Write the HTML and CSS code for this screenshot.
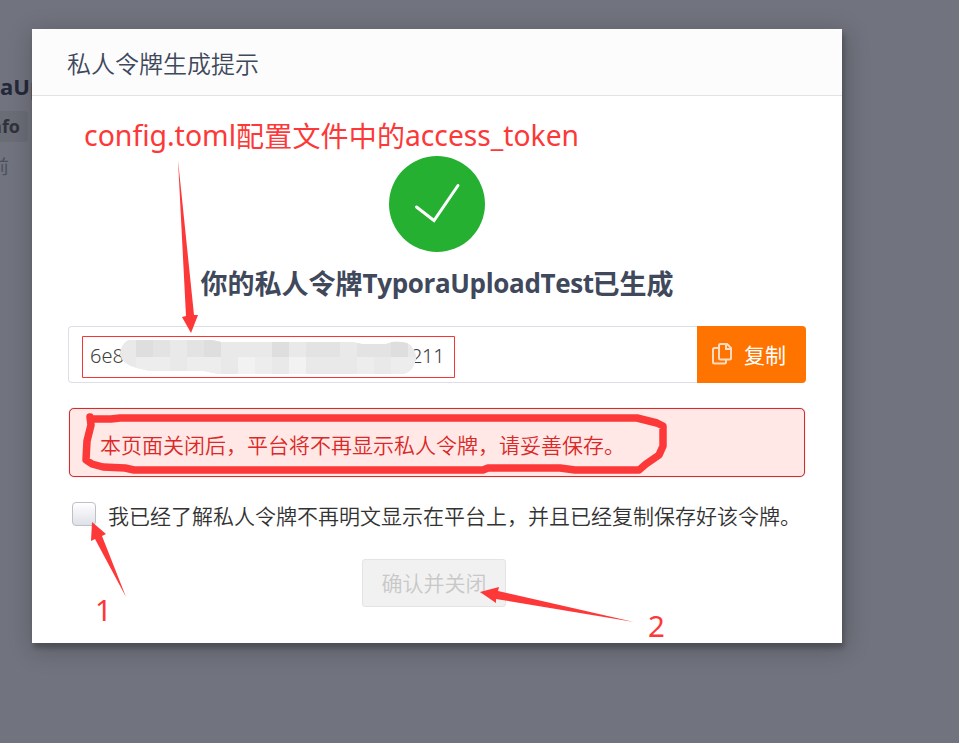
FILE: index.html
```html
<!DOCTYPE html>
<html lang="zh-CN">
<head>
<meta charset="utf-8">
<title>私人令牌生成提示</title>
<link rel="stylesheet" href="styles.css">
</head>
<body>
<aside class="behind">
  <div class="behind-name"><span>aUp</span></div>
  <div class="behind-chip"><span>info</span></div>
  <div class="behind-time"><span>前</span></div>
</aside>
<main class="modal">
  <header class="modal-header">私人令牌生成提示</header>
  <section class="modal-body">
    <svg class="success" viewBox="0 0 96 96"><circle cx="48" cy="48" r="48"/><path d="M27.500 51L45 64.500L69 29.500"/></svg>
    <h2 class="heading"><span>你的私人令牌</span><span class="latin">TyporaUploadTest</span><span>已生成</span></h2>
    <div class="token-row">
      <div class="token"><span>6e8</span><span class="token-end">211</span></div>
      <button class="copy">
        <svg viewBox="0 0 20 22"><path d="M7 5H2.500Q1 5 1 6.500V19Q1 20.500 2.500 20.500H12.500Q14 20.500 14 19V17M8.500 1H15L19 5V15Q19 16.500 17.500 16.500H8.500Q7 16.500 7 15V2.500Q7 1 8.500 1ZM14 1V6H19"/></svg>
        <span>复制</span>
      </button>
    </div>
    <div class="alert">本页面关闭后，平台将不再显示私人令牌，请妥善保存。</div>
    <label class="agree"><span class="box"></span><span>我已经了解私人令牌不再明文显示在平台上，并且已经复制保存好该令牌。</span></label>
    <button class="confirm" disabled>确认并关闭</button>
  </section>
</main>
<svg class="notes" viewBox="0 0 959 743">
  <defs><clipPath id="smear"><path d="M120 355Q120 345 128 340H212L221 342H353L362 344H386L392 342Q409 341 412 347Q418 355 415 362Q413 371 404 374H218L204 371H150L137 368Q123 365 120 355Z"/></clipPath></defs>
  <g clip-path="url(#smear)" shape-rendering="crispEdges">
    <path fill="#e9e9e9" d="M118 338H420V376H118Z"/>
    <path fill="#dedede" d="M136 340h17v17h-17zM204 340h17v17h-17zM391 340h17v17h-17zM272 340h17v17h-17z"/>
    <path fill="#e3e3e3" d="M153 340h17v17h-17zM187 340h17v17h-17zM306 340h34v17h-34zM357 340h34v17h-34z"/>
    <path fill="#ededed" d="M136 357h34v17h-34zM187 357h34v17h-34zM255 357h17v17h-17zM357 357h17v17h-17zM391 357h25v17h-25z"/>
    <path fill="#f2f2f2" d="M238 357h17v17h-17zM289 357h17v17h-17z"/>
  </g>
  <path class="frame" d="M82.500 336.500H454.500V377.500H82.500Z"/>
  <path class="scribble" d="M90 417L91 425L87 441L86 460L92 464L103 467L125 468L134 470H483L488 468H560L575 470H639L646 464L659 455L663 446V426L657 423L637 418H120L111 419H92"/>
  <g class="ink">
    <path d="M178 160L194 315L198 315L191 333L182 317L186 316Z"/>
    <path d="M92 522L106 534L102 536L126 597L95 539L91 541Z"/>
    <path d="M480 592L499 587L498 591L634 622L496 599L496 603Z"/>
    <text x="84" y="146" textLength="152" lengthAdjust="spacingAndGlyphs">config.toml</text>
    <text class="cjk" x="236" y="147" textLength="169">配置文件中的</text>
    <text x="405" y="146" textLength="174" lengthAdjust="spacingAndGlyphs">access_token</text>
    <text x="95" y="621">1</text>
    <text x="648" y="637">2</text>
  </g>
</svg>
</body>
</html>
```
FILE: styles.css
```css
* { box-sizing: border-box; }
body {
  margin: 0;
  height: 743px;
  overflow: hidden;
  display: flex;
  align-items: flex-start;
  background: #71737e;
  font-family: "Noto Sans", "Noto Sans CJK SC", sans-serif;
}
.behind {
  width: 32px;
  flex: none;
  padding-top: 69px;
}
.behind > div { display: flex; justify-content: flex-end; white-space: nowrap; }
.behind > .behind-name { justify-content: flex-start; height: 34px; font: 700 22px/34px "Open Sans"; color: #24283a; }
.behind-chip { width: 28px; height: 31px; margin-top: 8px; background: #6a6c76; border-radius: 0 4px 4px 0; font: 700 18px/31px "Open Sans"; color: #30323b; }
.behind-chip span { margin-right: 8px; }
.behind-time { width: 9px; margin-top: 10px; font-size: 19px; line-height: 30px; color: #4a4f5e; }
.modal {
  width: 810px;
  height: 614px;
  margin-top: 29px;
  flex: none;
  z-index: 1;
  background: #fff;
  box-shadow: 1.5px 4.5px 4.5px rgba(0,0,0,.2), 1.5px 4.5px 22px 3px rgba(0,0,0,.2);
}
.modal-header {
  height: 67px;
  padding: 0 35px;
  background: #fcfcfd;
  border-bottom: 1px solid #e3e3e5;
  color: #40485b;
  font-family: "Noto Sans CJK SC", sans-serif;
  font-size: 24px;
  font-weight: 350;
  line-height: 68px;
}
.modal-body {
  display: flex;
  flex-direction: column;
  align-items: center;
  padding: 60px 36px 0;
  font-family: "Noto Sans CJK SC", sans-serif;
  font-weight: 350;
}
.success { width: 96px; height: 96px; fill: #25b032; }
.success path { fill: none; stroke: #fff; stroke-width: 3; stroke-linecap: round; }
.heading {
  display: flex;
  height: 38px;
  margin: 12px 0 24px;
  color: #40485b;
  font-size: 27px;
  line-height: 38px;
  white-space: nowrap;
}
.heading .latin { width: 230px; font-family: "Open Sans"; font-size: 26px; letter-spacing: -.35px; }
.token-row { display: flex; width: 738px; height: 57px; }
.token {
  width: 629px;
  display: flex;
  align-items: center;
  padding-left: 21px;
  border: 1px solid #dcdfe7;
  border-right: 0;
  border-radius: 4px 0 0 4px;
  color: #404040;
  font-family: "Noto Sans", sans-serif;
  font-size: 20px;
  line-height: 30px;
  padding-top: 2px;
}
.token-end { margin-left: 287px; letter-spacing: -.3px; }
.copy {
  width: 109px;
  display: flex;
  align-items: center;
  gap: 12px;
  padding: 0 0 2px 15px;
  border: 0;
  border-radius: 0 4px 4px 0;
  background: #ff7300;
  color: #fff;
  font: 400 21px "Noto Sans CJK SC", sans-serif;
}
.copy svg { width: 20px; height: 22px; fill: none; stroke: #ffdcbf; stroke-width: 2; overflow: visible; }
.alert {
  width: 736px;
  height: 69px;
  margin: 25px 0 0;
  padding-left: 30px;
  border: 1.500px solid #db2828;
  border-radius: 5px;
  background: #ffe8e6;
  box-shadow: 0 0 1px #8a8a8a;
  color: #db2828;
  font-size: 21px;
  line-height: 71px;
  white-space: nowrap;
}
.agree {
  align-self: stretch;
  display: flex;
  height: 24px;
  margin-top: 25px;
  padding-left: 4px;
  gap: 12px;
  color: #333;
  font-size: 21px;
  line-height: 27px;
  white-space: nowrap;
}
.box { width: 24px; height: 24px; border: 1px solid #bcc0c8; border-radius: 4px; background: linear-gradient(#fff, #dfe1e8); }
.confirm {
  width: 144px;
  height: 48px;
  margin: 33px 6px 0 0;
  padding: 0 0 2px;
  border: 1.500px solid #e4e4e4;
  border-radius: 3px;
  background: #f1f1f1;
  color: #c8c8c8;
  font: 350 21px/44px "Noto Sans CJK SC", sans-serif;
}
.notes { position: absolute; top: 0; left: 0; z-index: 2; width: 959px; height: 743px; pointer-events: none; }
.frame { fill: none; stroke: #f63636; }
.scribble { fill: none; stroke: #fd3838; stroke-width: 7.500; stroke-linecap: round; stroke-linejoin: round; }
.ink { fill: #fd3838; font-family: "Noto Sans", sans-serif; font-size: 29.5px; }
.ink .cjk { font-family: "Noto Sans CJK SC", sans-serif; font-size: 28px; }
```
